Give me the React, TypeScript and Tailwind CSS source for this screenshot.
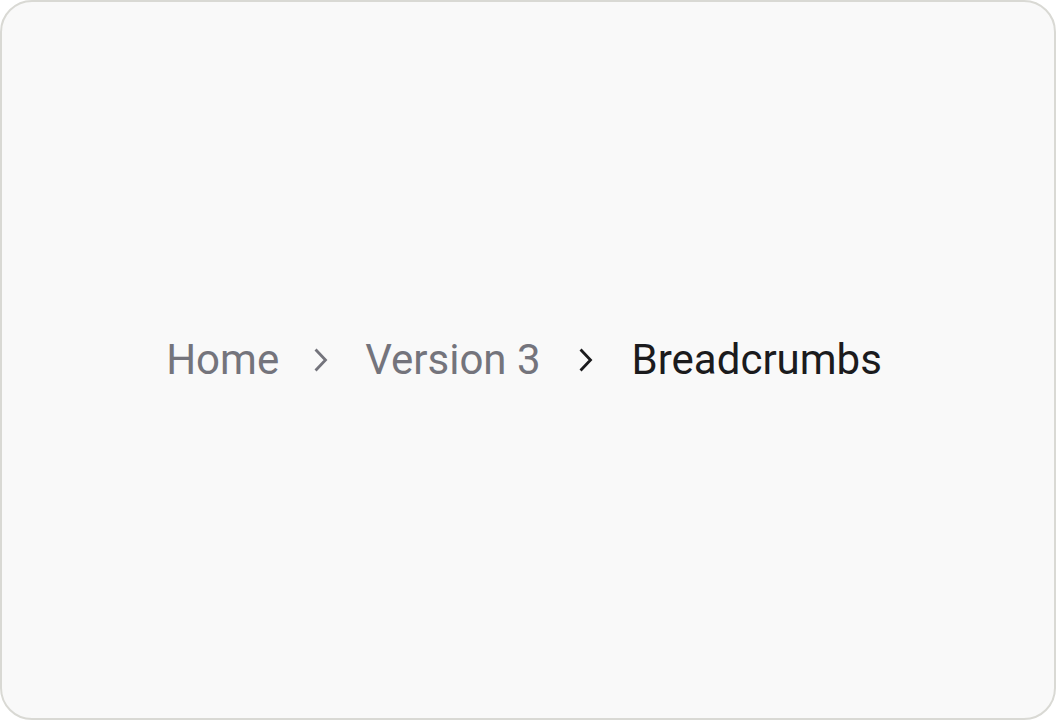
import React from 'react';

const Chevron: React.FC<{ className?: string }> = ({ className }) => (
  <svg viewBox="0 0 14 24" className={className} fill="none" stroke="currentColor" strokeWidth={2.8} strokeLinecap="square" overflow="visible">
    <path d="M2.5 2.5l9 9.5-9 9.5" />
  </svg>
);

export default function App() {
  return (
    <div className="w-[1056px] h-[720px] bg-[#f9f9f9] border-2 border-[#d9d9d4] rounded-[32px] flex items-center justify-center" style={{ fontFamily: 'Roboto, "Liberation Sans", sans-serif' }}>
      <nav className="flex items-center text-[42px] leading-none mr-[8px]">
        <span className="text-[#74747c]">Home</span>
        <Chevron className="w-[14px] h-[24px] ml-[35px] mr-[37px] text-[#74747c]" />
        <span className="text-[#74747c]">Version 3</span>
        <Chevron className="w-[14px] h-[24px] ml-[38px] mr-[39px] text-[#1b1b1d]" />
        <span className="text-[#1b1b1d]">Breadcrumbs</span>
      </nav>
    </div>
  );
}
